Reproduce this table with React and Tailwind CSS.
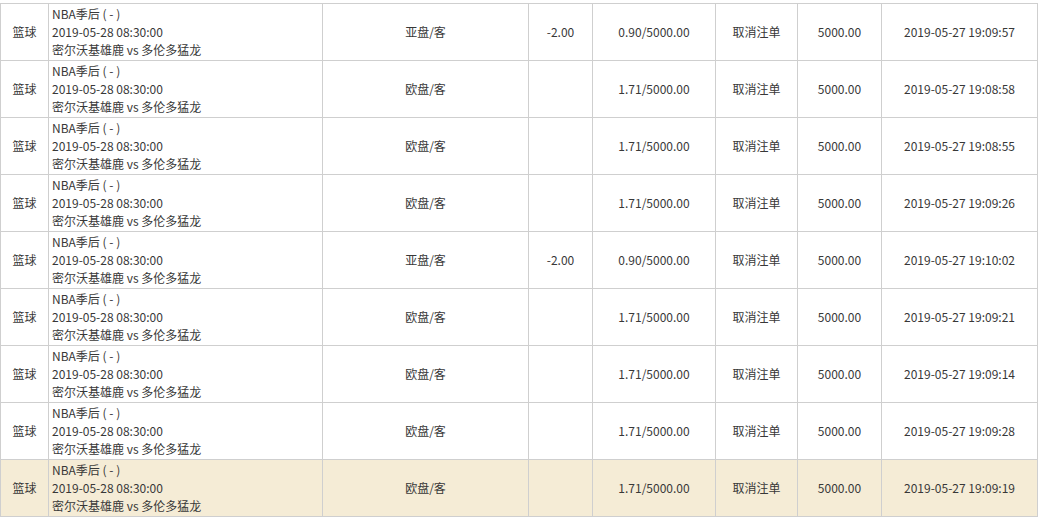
import React from 'react';

const ROWS = [
  { pan: '亚盘/客', hdp: '-2.00', odds: '0.90/5000.00', time: '2019-05-27 19:09:57' },
  { pan: '欧盘/客', hdp: '', odds: '1.71/5000.00', time: '2019-05-27 19:08:58' },
  { pan: '欧盘/客', hdp: '', odds: '1.71/5000.00', time: '2019-05-27 19:08:55' },
  { pan: '欧盘/客', hdp: '', odds: '1.71/5000.00', time: '2019-05-27 19:09:26' },
  { pan: '亚盘/客', hdp: '-2.00', odds: '0.90/5000.00', time: '2019-05-27 19:10:02' },
  { pan: '欧盘/客', hdp: '', odds: '1.71/5000.00', time: '2019-05-27 19:09:21' },
  { pan: '欧盘/客', hdp: '', odds: '1.71/5000.00', time: '2019-05-27 19:09:14' },
  { pan: '欧盘/客', hdp: '', odds: '1.71/5000.00', time: '2019-05-27 19:09:28' },
  { pan: '欧盘/客', hdp: '', odds: '1.71/5000.00', time: '2019-05-27 19:09:19', active: true },
];

const cell = 'border border-[#cfcfcf] text-center align-middle p-0';

export default function App() {
  return (
    <div className="w-[1040px] h-[517px] overflow-hidden bg-white pt-[3px] text-[12px] text-[#383838] [font-family:'Noto_Sans_CJK_SC','Liberation_Sans',sans-serif]">
      <table className="border-collapse table-fixed w-[1038px] leading-[18px]">
        <colgroup>
          <col className="w-[48px]" />
          <col className="w-[274px]" />
          <col className="w-[206px]" />
          <col className="w-[64px]" />
          <col className="w-[123px]" />
          <col className="w-[82px]" />
          <col className="w-[84px]" />
          <col className="w-[156px]" />
        </colgroup>
        <tbody>
          {ROWS.map((r, i) => (
            <tr key={i} className={`h-[57px] ${r.active ? 'bg-[#f5ecd6]' : 'bg-white'}`}>
              <td className={cell}>篮球</td>
              <td className="border border-[#cfcfcf] align-middle text-left pl-[3px] py-[1px]">
                <div>NBA季后 ( - )</div>
                <div>2019-05-28 08:30:00</div>
                <div>密尔沃基雄鹿 vs 多伦多猛龙</div>
              </td>
              <td className={cell}>{r.pan}</td>
              <td className={cell}>{r.hdp}</td>
              <td className={cell}>{r.odds}</td>
              <td className={cell}>取消注单</td>
              <td className={cell}>5000.00</td>
              <td className={cell}>{r.time}</td>
            </tr>
          ))}
          <tr className="h-[20px] bg-[#f7f9f2]">
            <td className={cell} colSpan={3}></td>
            <td className={cell} colSpan={3}></td>
            <td className={cell} colSpan={2}></td>
          </tr>
        </tbody>
      </table>
    </div>
  );
}
